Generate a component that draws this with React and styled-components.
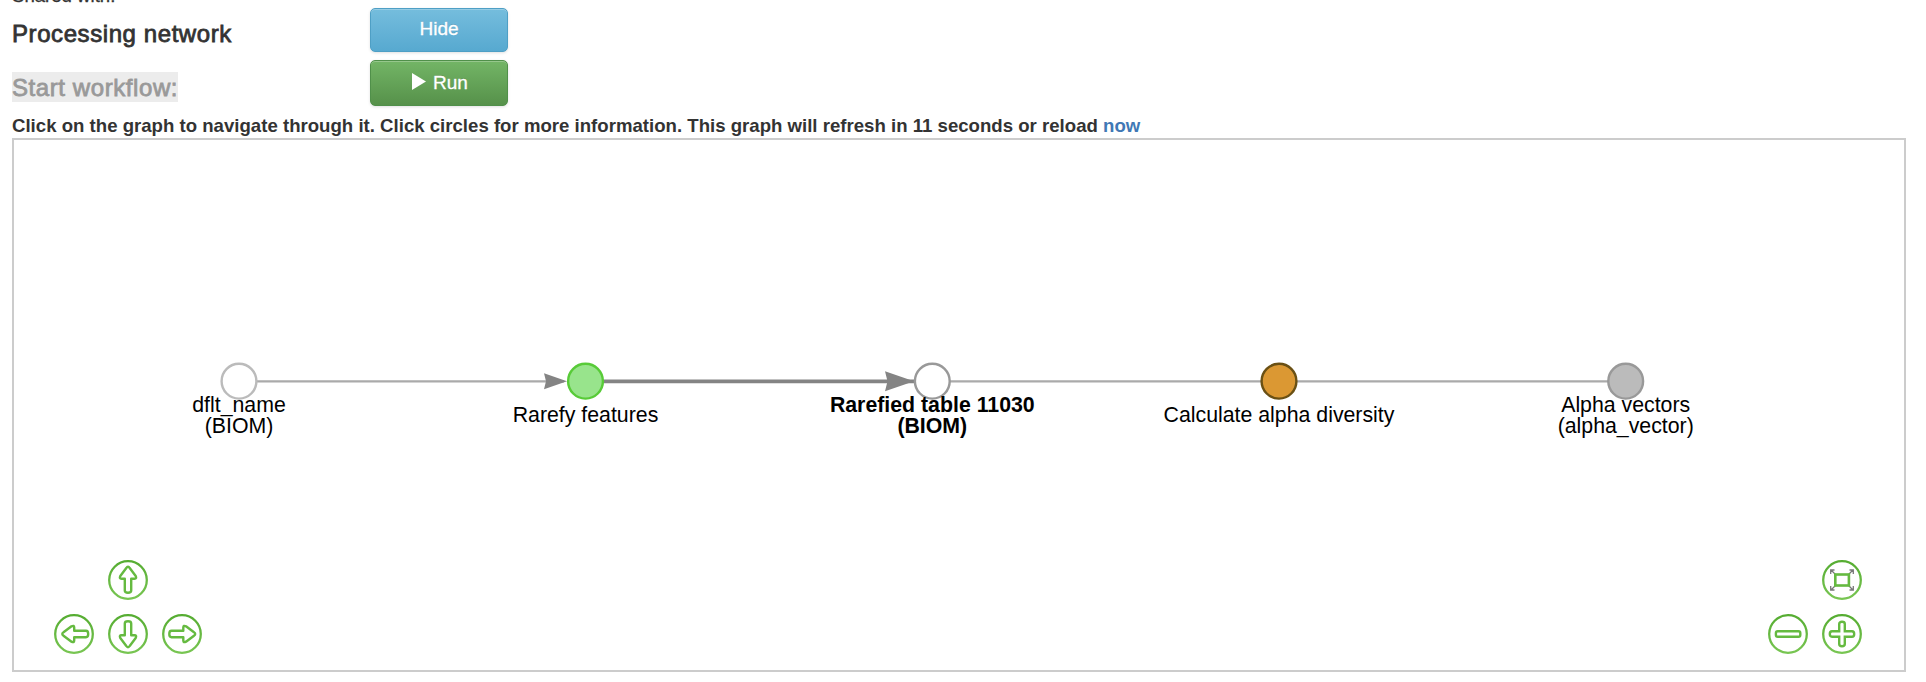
import React from 'react';
import styled, { createGlobalStyle } from 'styled-components';

const Global = createGlobalStyle`
  html, body { margin: 0; background: #fff; overflow: hidden; }
  body { font-family: "Liberation Sans", Arial, sans-serif; color: #333; }
  * { box-sizing: border-box; }
`;
const Page = styled.main`
  display: flex; flex-direction: column; height: 682px; padding: 0 20px 10px 12px; overflow: hidden;
`;
const Shared = styled.div`
  height: 8px; display: flex; align-items: flex-end; padding-bottom: 1px; font-size: 18.6px; line-height: 22px;
  -webkit-text-stroke: 0.3px currentColor;
`;
const Controls = styled.section`
  display: grid; grid-template-columns: 358px 138px; grid-template-rows: 44px 46px; row-gap: 8px;
`;
const Title = styled.h4`
  margin: 0; padding-top: ${p => p.$top}px; font-weight: 400; font-size: 24px; line-height: 30px; letter-spacing: 0.58px; white-space: nowrap;
  -webkit-text-stroke: 0.8px currentColor;
`;
const Muted = styled.span`
  display: inline-block; padding-top: 2px; line-height: 28px; color: #999; background: #ececec;
`;
const Button = styled.button`
  display: flex; align-items: center; justify-content: center; gap: 7px; padding: ${p => p.$pad};
  border: 1.5px solid ${p => p.$edge}; border-radius: 5px; color: #fff; font: 19px "Liberation Sans", Arial, sans-serif;
  background: linear-gradient(${p => p.$from}, ${p => p.$to});
  box-shadow: inset 0 1px 0 rgba(255,255,255,.25), 0 1px 3px rgba(0,0,0,.12);
  text-shadow: 0 -1px 0 rgba(0,0,0,.15);
  -webkit-text-stroke: 0.3px currentColor;
  svg { display: block; margin-bottom: 2px; }
`;
const Hint = styled.p`
  margin: 8px 0 0; height: 24px; font-size: 18.6px; line-height: 23px; font-weight: 700; white-space: nowrap; letter-spacing: 0.008px;
  a { color: #4078b5; text-decoration: none; }
`;
const Panel = styled.section`
  height: 534px; border: 2px solid #ccc; display: grid;
`;
const Graph = styled.svg`
  grid-area: 1 / 1; width: 1890px; height: 530px; display: block;
  text { font-family: "Liberation Sans", Arial, sans-serif; font-size: 21.3px; text-anchor: middle; fill: #000; }
`;
const Navigation = styled.div`
  grid-area: 1 / 1; align-self: end; display: flex; justify-content: space-between; padding: 0 42px 16px 40px;
`;
const Pad = styled.div`
  display: grid; grid-template-columns: repeat(${p => p.$columns}, 40px); gap: 14px;
`;
const NavButton = styled.button`
  grid-column: ${p => p.$column}; grid-row: ${p => p.$row}; width: 40px; height: 40px; padding: 0; border: 0; background: none;
  svg { display: block; }
`;

const nodes = [
  { x: 225, fill: '#fff', stroke: '#bbb', lines: ['dflt_name', '(BIOM)'] },
  { x: 571.5, fill: '#98e48c', stroke: '#58cb38', lines: ['Rarefy features'] },
  { x: 918.3, fill: '#fff', stroke: '#999', lines: ['Rarefied table 11030', '(BIOM)'], bold: true },
  { x: 1265, fill: '#db9833', stroke: '#6a5014', lines: ['Calculate alpha diversity'] },
  { x: 1611.7, fill: '#bbb', stroke: '#999', lines: ['Alpha vectors', '(alpha_vector)'] },
];
const arrow = 'M20 6.8 Q21 6.8 21.7 8 L27.7 16 Q29 18.7 26.5 18.7 H23.2 V30.5 Q23.2 32.7 20 32.7 T16.8 30.5 V18.7 H13.5 Q11 18.7 12.3 16 L18.3 8 Q19 6.8 20 6.8Z';

const Node = ({ x, fill, stroke, lines, bold }) => (
  <g>
    <circle cx={x} cy="241.2" r="17.4" fill={fill} stroke={stroke} strokeWidth="2.4" />
    {lines.map((line, i) => (
      <text key={line} x={x} y={lines.length === 1 ? 281.8 : 272.2 + i * 20.6} fontWeight={bold ? 700 : 400}>{line}</text>
    ))}
  </g>
);

const NavIcon = ({ turn, shift = 0, children }) => (
  <svg width="40" height="40" viewBox="0 0 40 40" fill="none">
    <defs>
      <linearGradient id="ring" x1="0" y1="0" x2="0" y2="40" gradientUnits="userSpaceOnUse">
        <stop stopColor="#55ac31" /><stop offset="1" stopColor="#79c653" />
      </linearGradient>
    </defs>
    <circle cx="20" cy="20" r="18.8" stroke="url(#ring)" strokeWidth="2.3" />
    {children || <path d={arrow} transform={`translate(${shift} 0) rotate(${turn} 20 20)`} stroke="#65ba40" strokeWidth="2.4" strokeLinejoin="round" />}
  </svg>
);

export default function App() {
  return (
    <Page>
      <Global />
      <Shared>Shared with:</Shared>
      <Controls>
        <Title $top={11}>Processing network</Title>
        <Button $pad="0 0 2px" $from="#75bddd" $to="#57a9d0" $edge="#4e9fc5">Hide</Button>
        <Title $top={12}><Muted>Start workflow:</Muted></Title>
        <Button $pad="0 0 0 2px" $from="#73b566" $to="#56914a" $edge="#50904a">
          <svg width="14" height="18" viewBox="0 0 14 18"><path d="M0 0 14 8.5 0 17Z" fill="#fff" /></svg>
          Run
        </Button>
      </Controls>
      <Hint>Click on the graph to navigate through it. Click circles for more information. This graph will refresh in 11 seconds or reload <a>now</a></Hint>
      <Panel>
        <Graph viewBox="0 0 1890 530">
          <path d="M225 241.3H550M918 241.3H1612" stroke="#aaa" strokeWidth="2.2" />
          <path d="M571 241.3H900" stroke="#848484" strokeWidth="3.8" />
          <path d="M530 233.3 553 241.3 530 249.3 532 241.3ZM871 231.3 900 241.3 871 251.3 873.5 241.3Z" fill="#848484" />
          {nodes.map(n => <Node key={n.x} {...n} />)}
        </Graph>
        <Navigation>
          <Pad $columns={3}>
            <NavButton $column={2} $row={1} aria-label="Up"><NavIcon turn={0} /></NavButton>
            <NavButton $column={1} $row={2} aria-label="Left"><NavIcon turn={-90} shift={1.5} /></NavButton>
            <NavButton $column={2} $row={2} aria-label="Down"><NavIcon turn={180} /></NavButton>
            <NavButton $column={3} $row={2} aria-label="Right"><NavIcon turn={90} /></NavButton>
          </Pad>
          <Pad $columns={2}>
            <NavButton $column={2} $row={1} aria-label="Fit">
              <NavIcon>
                <path d="M13.5 14.5 9 10M26.5 14.5 31 10M13.5 25.5 9 30M26.5 25.5 31 30M8.7 14V10H12.5M27.5 10H31.3V14M8.7 26V30H12.5M27.5 30H31.3V26" stroke="#777" strokeWidth="1.3" />
                <rect x="13.3" y="14.5" width="13.6" height="11" stroke="#65ba40" strokeWidth="2.6" />
              </NavIcon>
            </NavButton>
            <NavButton $column={1} $row={2} aria-label="Zoom out">
              <NavIcon><rect x="7.9" y="17.2" width="24.4" height="5.6" rx="1.8" stroke="#65ba40" strokeWidth="2.4" /></NavIcon>
            </NavButton>
            <NavButton $column={2} $row={2} aria-label="Zoom in">
              <NavIcon><path d="M17.2 10Q17.2 7.8 20 7.8T22.8 10V17.2H30Q32.2 17.2 32.2 20T30 22.8H22.8V30Q22.8 32.2 20 32.2T17.2 30V22.8H10Q7.8 22.8 7.8 20T10 17.2H17.2Z" stroke="#65ba40" strokeWidth="2.4" /></NavIcon>
            </NavButton>
          </Pad>
        </Navigation>
      </Panel>
    </Page>
  );
}
